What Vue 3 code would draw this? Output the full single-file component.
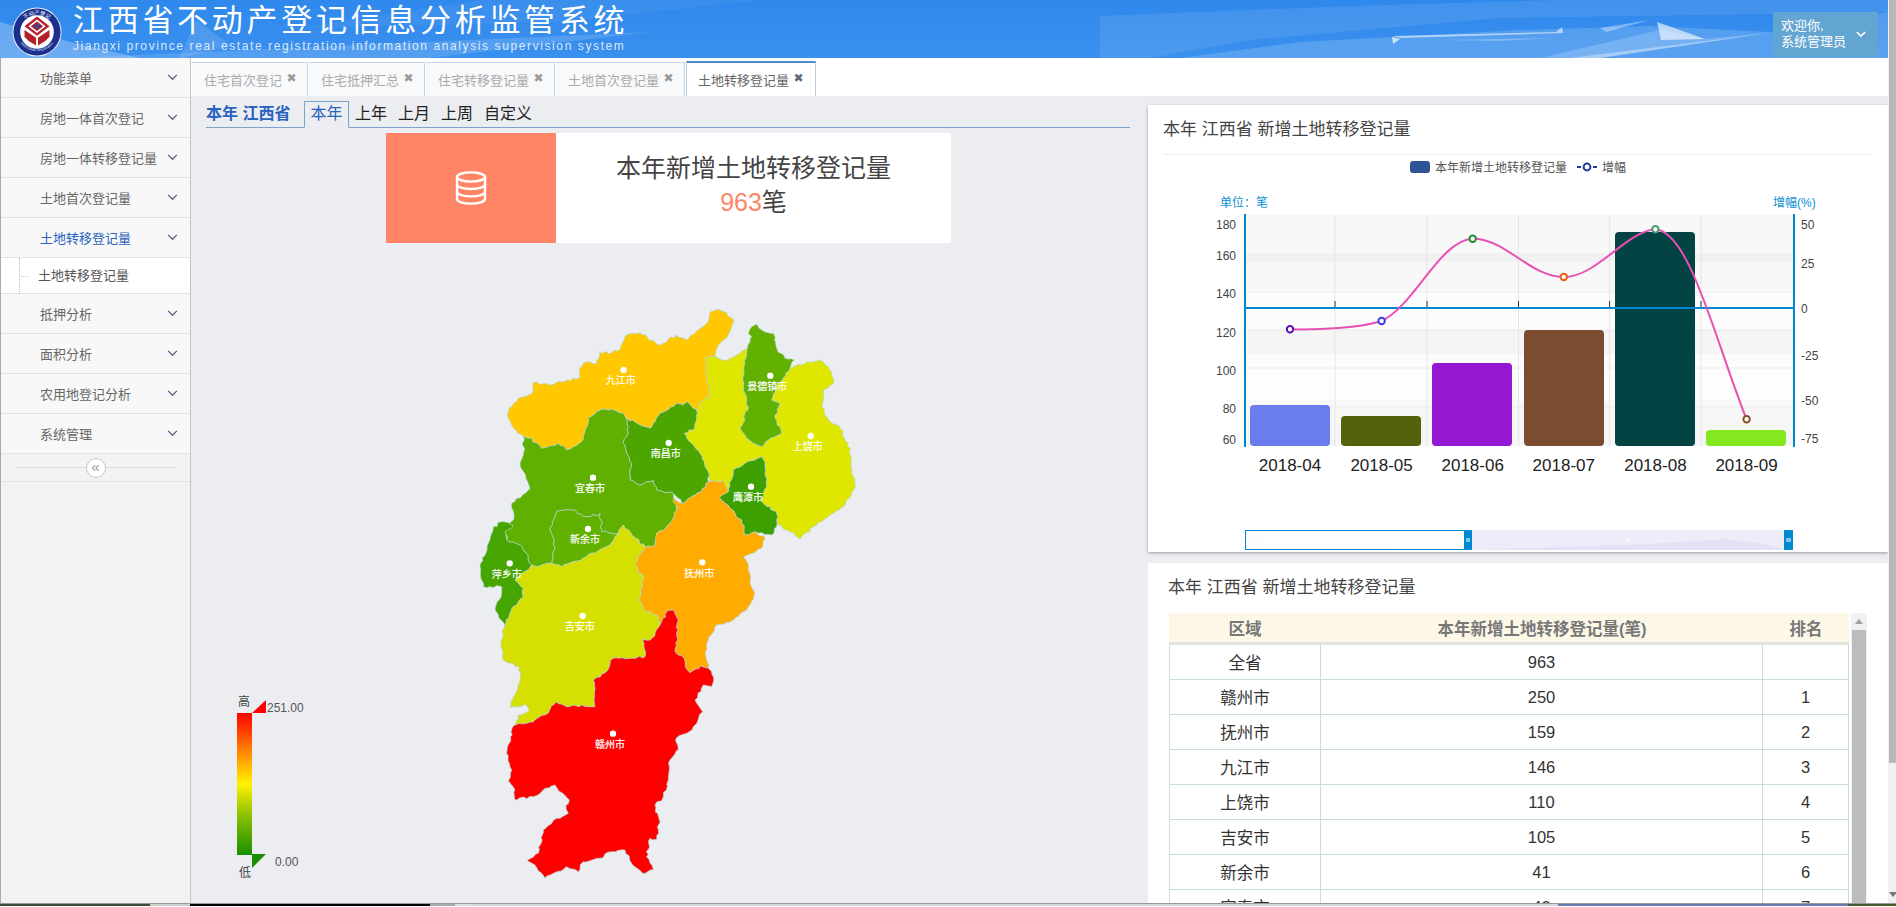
<template>
  <div class="page">
    <div class="frame">
      <div class="app">
        <!-- 顶部标题栏 -->
        <header class="top-bar">
          <svg class="top-deco" viewBox="0 0 1888 58" preserveAspectRatio="none">
            <polygon points="0,22 70,42 140,58 0,58" fill="#fff" opacity=".25" />
            <polygon points="70,58 650,32 430,58" fill="#fff" opacity=".14" />
            <polygon points="196,20 232,46 180,58" fill="#fff" opacity=".12" />
            <polygon points="480,0 760,0 560,22 300,28" fill="#fff" opacity=".05" />
            <polygon points="1100,16 1350,6 1560,0 1888,0 1888,12 1500,18 1250,40 1150,58 1100,58" fill="#fff" opacity=".09" />
            <polygon points="1180,58 1300,42 1520,30 1650,26 1770,32 1888,12 1888,58" fill="#fff" opacity=".16" />
            <polygon points="1540,58 1660,30 1705,39 1773,32 1600,58" fill="#fff" opacity=".18" />
            <polygon points="1392,36 1556,32 1562,27 1563,33 1400,38" fill="#fff" opacity=".55" />
            <polygon points="1392,37 1400,39 1393,44" fill="#fff" opacity=".7" />
            <polygon points="1440,40 1555,38 1500,41" fill="#fff" opacity=".25" />
            <polygon points="1657,22 1705,39 1661,40" fill="#fff" opacity=".6" />
            <polygon points="1600,28 1650,20 1606,32" fill="#fff" opacity=".35" />
            <polygon points="1570,58 1770,33 1600,58" fill="#fff" opacity=".35" />
          </svg>
          <svg class="logo" viewBox="0 0 52 52">
            <defs>
              <path id="ring-top" d="M6 28 A20 20 0 0 1 46 28" />
              <path id="ring-bottom" d="M4 24 A22 22 0 0 0 48 24" />
            </defs>
            <circle cx="26" cy="26" r="25.5" fill="#e8eef8" />
            <circle cx="26" cy="26" r="24.5" fill="#1b2f8c" />
            <circle cx="26" cy="26" r="17.5" fill="#fff" />
            <text class="logo-text"><textPath href="#ring-top" startOffset="50%" text-anchor="middle">不动产登记</textPath></text>
            <text class="logo-en"><textPath href="#ring-bottom" startOffset="50%" text-anchor="middle">Real Estate Registration</textPath></text>
            <polygon points="26,10 39,20 26,30 13,20" fill="#b3202a" />
            <polygon points="26,13 35,20 26,27 17,20" fill="#fff" />
            <polygon points="26,15 32.4,20 26,25 19.6,20" fill="#b3202a" />
            <polygon points="26,17.2 29.6,20 26,22.8 22.4,20" fill="#2c4aa0" />
            <polygon points="13,24 25,32 25,40 17,35 13,31" fill="#b3202a" />
            <polygon points="39,24 27,32 27,40 35,35 39,31" fill="#b3202a" />
          </svg>
          <div class="brand">
            <div class="brand-cn">江西省不动产登记信息分析监管系统</div>
            <div class="brand-en">Jiangxi province real estate registration information analysis supervision system</div>
          </div>
          <div class="user-box">
            <div>欢迎你,<br />系统管理员</div>
            <svg class="user-arrow" viewBox="0 0 12 8"><polyline points="1,1 6,6 11,1" /></svg>
          </div>
        </header>

        <div class="body-row">
          <!-- 左侧菜单 -->
          <aside class="side">
            <template v-for="item in menus" :key="item.name">
              <div class="menu-item" :class="{ active: item.active }">
                <span>{{ item.name }}</span>
                <svg class="chevron" viewBox="0 0 12 8"><polyline points="1,1 6,6 11,1" /></svg>
              </div>
              <div v-if="item.child" class="menu-child">
                <i class="tree-v"></i><i class="tree-h"></i>
                <span>{{ item.child }}</span>
              </div>
            </template>
            <div class="collapse-row">
              <span class="collapse-btn">«</span>
            </div>
          </aside>

          <main class="main">
            <!-- 标签页 -->
            <div class="tabs">
              <div
                v-for="(tab, index) in tabs"
                :key="tab"
                class="tab"
                :class="{ active: index === tabs.length - 1 }"
              >
                <span>{{ tab }}</span><span class="tab-x">✖</span>
              </div>
            </div>

            <div class="content">
              <section class="left">
                <div class="filter">
                  <span class="filter-title">本年 江西省</span>
                  <span class="filter-on">本年</span>
                  <span v-for="f in filters" :key="f" class="filter-item">{{ f }}</span>
                </div>

                <div class="stat">
                  <div class="stat-icon">
                    <svg viewBox="0 0 32 34" width="32" height="34">
                      <g fill="none" stroke="#fff" stroke-width="2.4">
                        <ellipse cx="16" cy="6" rx="14" ry="4.6" />
                        <path d="M2 6v22c0 2.6 6.3 4.6 14 4.6s14-2 14-4.6V6" />
                        <path d="M2 13.4c0 2.6 6.3 4.6 14 4.6s14-2 14-4.6" />
                        <path d="M2 20.8c0 2.6 6.3 4.6 14 4.6s14-2 14-4.6" />
                      </g>
                    </svg>
                  </div>
                  <div class="stat-text">
                    <div>本年新增土地转移登记量</div>
                    <div><span class="stat-num">963</span>笔</div>
                  </div>
                </div>

                <!-- 地图 -->
                <svg class="map" viewBox="0 0 1260 1851">
                  <path
                    v-for="r in regions"
                    :key="r.name"
                    :d="r.d"
                    :fill="r.color"
                    stroke="#b2d6d2"
                    stroke-width="2"
                    stroke-linejoin="round"
                  />
                  <g v-for="r in regions" :key="r.name + '-label'">
                    <circle :cx="r.dot[0]" :cy="r.dot[1]" r="9.5" fill="#fff" />
                    <text :x="r.dot[0] - 9" :y="r.dot[1] + 43" class="map-label">{{ r.name }}</text>
                  </g>
                </svg>

                <!-- 图例 -->
                <div class="legend">
                  <span class="legend-high">高</span>
                  <span class="legend-max">251.00</span>
                  <i class="legend-top"></i>
                  <i class="legend-bar"></i>
                  <i class="legend-bottom"></i>
                  <span class="legend-min">0.00</span>
                  <span class="legend-low">低</span>
                </div>
              </section>

              <section class="right">
                <div class="card chart-card">
                  <div class="card-title">本年 江西省 新增土地转移登记量</div>
                  <svg class="chart" viewBox="1148 155 740 397">
                    <!-- 图例 -->
                    <rect x="1410" y="161" width="20" height="12" rx="3" fill="#2f5496" />
                    <text x="1435" y="171.5" class="t-legend">本年新增土地转移登记量</text>
                    <line x1="1577" y1="167" x2="1597" y2="167" stroke="#1d3aa0" stroke-width="2" stroke-dasharray="4 12 4" />
                    <circle cx="1587" cy="167" r="3.4" fill="#fff" stroke="#1d3aa0" stroke-width="2" />
                    <text x="1602" y="171.5" class="t-legend">增幅</text>

                    <text x="1220" y="207" class="t-unit">单位：笔</text>
                    <text x="1773" y="207" class="t-unit">增幅(%)</text>

                    <!-- 背景分隔带 -->
                    <rect v-for="b in bands" :key="b[0]" x="1245" :y="b[0]" width="549" :height="b[1]" :fill="b[2]" />
                    <line v-for="x in gridX" :key="x" :x1="x" :x2="x" y1="215" y2="446" stroke="#e6e6e6" />
                    <line v-for="y in gridY" :key="y" x1="1245" x2="1794" :y1="y" :y2="y" stroke="#ececec" />

                    <rect
                      v-for="b in bars"
                      :key="b.x"
                      :x="b.x"
                      :y="b.y"
                      width="80"
                      :height="446 - b.y"
                      rx="4"
                      :fill="b.color"
                    />

                    <line x1="1245" x2="1794" y1="308" y2="308" stroke="#0088d0" stroke-width="2" />
                    <line v-for="x in gridX" :key="'t' + x" :x1="x" :x2="x" y1="301" y2="307" stroke="#333" />
                    <line x1="1245" x2="1245" y1="214" y2="447" stroke="#0088d0" stroke-width="2" />
                    <line x1="1794" x2="1794" y1="214" y2="447" stroke="#0088d0" stroke-width="2" />

                    <text v-for="t in leftTicks" :key="t[0]" x="1236" :y="t[1] + 4.5" class="t-axis" text-anchor="end">{{ t[0] }}</text>
                    <text v-for="t in rightTicks" :key="t[0]" x="1801" :y="t[1] + 4.5" class="t-axis">{{ t[0] }}</text>
                    <text v-for="(m, i) in months" :key="m" :x="points[i].x" y="471" class="t-month" text-anchor="middle">{{ m }}</text>

                    <path
                      d="M1290 329.3C1320 330 1360 328 1381.6 321C1415 305 1440 240 1472.7 238.7C1505 238 1530 277 1563.8 277C1597 277 1625 232 1655.4 229.3C1690 232 1715 340 1746.6 419.3"
                      fill="none"
                      stroke="#ea4fb4"
                      stroke-width="2"
                    />
                    <circle
                      v-for="p in points"
                      :key="p.x"
                      :cx="p.x"
                      :cy="p.y"
                      r="3.2"
                      fill="#fff"
                      :stroke="p.color"
                      stroke-width="2"
                    />

                    <!-- 缩放条 -->
                    <rect x="1245" y="530" width="548" height="20" fill="#eeecf8" />
                    <polygon points="1245,550 1245,540 1330,546 1472,550" fill="#e6e3f6" />
                    <polygon points="1472,550 1650,544 1725,539 1760,543 1785,550" fill="#e4e0f5" />
                    <rect x="1245.5" y="530.5" width="219" height="19" fill="#fff" fill-opacity=".85" stroke="#0088d0" />
                    <rect x="1464" y="530" width="8" height="20" fill="#0088d0" />
                    <rect x="1784" y="530" width="9" height="20" fill="#0088d0" />
                    <path d="M1466 539h4M1466 541h4M1786 539h5M1786 541h5M1626 539h4M1626 541h4" stroke="#fff" />
                  </svg>
                </div>

                <div class="card table-card">
                  <div class="table-title">本年 江西省 新增土地转移登记量</div>
                  <div class="table-wrap">
                    <table class="rank-table">
                      <colgroup>
                        <col class="col-area" />
                        <col class="col-count" />
                        <col class="col-rank" />
                      </colgroup>
                      <thead>
                        <tr>
                          <th>区域</th>
                          <th>本年新增土地转移登记量(笔)</th>
                          <th>排名</th>
                        </tr>
                      </thead>
                      <tbody>
                        <tr v-for="row in rows" :key="row[0]">
                          <td>{{ row[0] }}</td>
                          <td>{{ row[1] }}</td>
                          <td>{{ row[2] }}</td>
                        </tr>
                      </tbody>
                    </table>
                    <div class="table-scroll">
                      <div class="scroll-up"></div>
                      <div class="scroll-thumb"></div>
                    </div>
                  </div>
                </div>
              </section>
            </div>
          </main>
        </div>
      </div>

      <!-- 页面滚动条 -->
      <div class="page-scroll">
        <div class="page-thumb"></div>
        <div class="page-down"></div>
      </div>
    </div>

    <div class="taskbar">
      <i v-for="s in taskbar" :key="s[0]" :style="{ width: s[1] + 'px', background: s[0] }"></i>
    </div>
  </div>
</template>

<script setup>
const menus = [
  { name: '功能菜单' },
  { name: '房地一体首次登记' },
  { name: '房地一体转移登记量' },
  { name: '土地首次登记量' },
  { name: '土地转移登记量', active: true, child: '土地转移登记量' },
  { name: '抵押分析' },
  { name: '面积分析' },
  { name: '农用地登记分析' },
  { name: '系统管理' }
]

const tabs = ['住宅首次登记', '住宅抵押汇总', '住宅转移登记量', '土地首次登记量', '土地转移登记量']
const filters = ['上年', '上月', '上周', '自定义']

const bands = [
  [215, 38, '#f8f8f8'], [253, 9, '#f1f1f1'], [262, 30, '#f8f8f8'], [292, 38, '#fcfcfc'],
  [330, 24, '#f5f5f5'], [354, 14, '#fcfcfc'], [368, 32, '#fdfdfd'], [400, 7, '#f8f8f8'], [407, 39, '#f6f6f6']
]
const gridX = [1335, 1427, 1518.5, 1609.6, 1701]
const gridY = [292, 330, 368, 407]

const bars = [
  { x: 1250, y: 405, color: '#6b7cec' },
  { x: 1341, y: 416, color: '#55620c' },
  { x: 1432, y: 363, color: '#9517d2' },
  { x: 1524, y: 330, color: '#7a4c30' },
  { x: 1615, y: 232, color: '#034343' },
  { x: 1706, y: 430, color: '#84e81f' }
]
const points = [
  { x: 1290, y: 329.3, color: '#5a0fb0' },
  { x: 1381.6, y: 321, color: '#3a3af0' },
  { x: 1472.7, y: 238.7, color: '#1e8a30' },
  { x: 1563.8, y: 277, color: '#f05a10' },
  { x: 1655.4, y: 229.3, color: '#4a9a70' },
  { x: 1746.6, y: 419.3, color: '#8a5020' }
]
const months = ['2018-04', '2018-05', '2018-06', '2018-07', '2018-08', '2018-09']
const leftTicks = [[180, 224.6], [160, 255], [140, 293], [120, 332], [100, 370], [80, 408], [60, 439]]
const rightTicks = [[50, 224.6], [25, 263], [0, 308.6], [-25, 355], [-50, 400], [-75, 438]]

const rows = [
  ['全省', 963, ''],
  ['赣州市', 250, 1],
  ['抚州市', 159, 2],
  ['九江市', 146, 3],
  ['上饶市', 110, 4],
  ['吉安市', 105, 5],
  ['新余市', 41, 6],
  ['宜春市', 40, 7]
]

const taskbar = [
  ['#3c4a33', 150], ['#cfcfcf', 40], ['#000', 240], ['#aaa', 25], ['#ddd', 17],
  ['#d8d8d8', 1086], ['#6a78b0', 290], ['#4c5a30', 48]
]

// 边界锯齿：按坐标取哈希，相邻区域共用的边能对上
const noise = (x, y, k) => {
  const v = Math.sin(x * 12.9898 + y * 78.233 + k) * 43758.5453
  return (v - Math.floor(v)) * 2 - 1
}
const rough = (pts) => {
  let d = ''
  pts.forEach((p, i) => {
    const q = pts[(i + 1) % pts.length]
    const steps = Math.max(1, Math.floor(Math.hypot(q[0] - p[0], q[1] - p[1]) / 9))
    for (let s = 0; s < steps; s++) {
      const x = Math.round(p[0] + ((q[0] - p[0]) * s) / steps)
      const y = Math.round(p[1] + ((q[1] - p[1]) * s) / steps)
      const j = s === 0 ? 0 : 4
      d += `${d ? 'L' : 'M'}${(x + noise(x, y, 1) * j).toFixed(1)} ${(y + noise(x, y, 2) * j).toFixed(1)}`
    }
  })
  return d + 'Z'
}

const regionData = [
  {
    name: '九江市', color: '#ffc800', dot: [491, 240],
    pts: [[145, 365], [175, 325], [215, 312], [220, 278], [265, 285], [320, 270], [360, 262], [358, 238], [380, 215], [410, 222], [418, 185], [445, 190], [480, 178], [498, 135], [540, 128], [570, 150], [600, 165], [650, 135], [680, 150], [735, 105], [745, 95], [752, 65], [775, 58], [800, 68], [822, 92], [810, 125], [785, 155], [768, 180], [768, 200], [735, 205], [740, 260], [750, 320], [718, 340], [712, 368], [682, 335], [668, 345], [650, 340], [600, 370], [570, 415], [540, 405], [498, 385], [490, 370], [455, 357], [420, 360], [385, 385], [375, 425], [365, 455], [340, 470], [320, 480], [295, 460], [265, 470], [245, 475], [215, 445], [190, 440], [160, 415], [145, 385]]
  },
  {
    name: '上饶市', color: '#dfe600', dot: [1052, 438],
    pts: [[735, 205], [768, 200], [800, 212], [830, 195], [862, 175], [855, 220], [850, 300], [865, 350], [840, 415], [860, 445], [905, 470], [925, 450], [965, 430], [945, 375], [960, 340], [935, 330], [950, 290], [990, 235], [1040, 215], [1085, 212], [1110, 240], [1122, 280], [1090, 300], [1085, 350], [1110, 395], [1140, 415], [1165, 460], [1175, 540], [1187, 590], [1150, 650], [1105, 680], [1060, 710], [1020, 748], [990, 725], [955, 705], [950, 670], [905, 635], [920, 590], [915, 530], [905, 500], [885, 510], [855, 520], [820, 540], [805, 605], [790, 572], [750, 575], [745, 545], [720, 490], [695, 460], [672, 430], [700, 420], [710, 390], [712, 368], [718, 340], [750, 320], [740, 260]]
  },
  {
    name: '景德镇市', color: '#62b000', dot: [931, 257],
    pts: [[890, 102], [905, 120], [940, 130], [950, 175], [975, 205], [1003, 210], [990, 235], [950, 290], [935, 330], [960, 340], [945, 375], [965, 430], [925, 450], [905, 470], [860, 445], [840, 415], [865, 350], [850, 300], [855, 220], [862, 175], [875, 140], [865, 130], [875, 110]]
  },
  {
    name: '南昌市', color: '#4da500', dot: [626, 459],
    pts: [[498, 385], [540, 405], [570, 415], [600, 370], [650, 340], [668, 345], [682, 335], [712, 368], [710, 390], [700, 420], [672, 430], [695, 460], [720, 490], [745, 545], [745, 575], [725, 605], [695, 620], [665, 640], [640, 610], [590, 600], [580, 572], [540, 585], [510, 570], [515, 520], [490, 460], [505, 430]]
  },
  {
    name: '宜春市', color: '#5fb000', dot: [399, 563],
    pts: [[190, 440], [215, 445], [245, 475], [265, 470], [295, 460], [320, 480], [340, 470], [365, 455], [375, 425], [385, 385], [420, 360], [455, 357], [490, 370], [498, 385], [505, 430], [490, 460], [515, 520], [510, 570], [540, 585], [580, 572], [590, 600], [640, 610], [650, 660], [630, 700], [590, 730], [580, 770], [555, 770], [520, 740], [490, 705], [475, 730], [425, 725], [420, 670], [380, 680], [335, 660], [290, 665], [270, 715], [285, 770], [275, 820], [240, 828], [215, 825], [200, 790], [180, 765], [140, 750], [135, 710], [160, 690], [155, 640], [210, 595], [180, 520], [190, 490]]
  },
  {
    name: '新余市', color: '#62b000', dot: [384, 717],
    pts: [[290, 665], [335, 660], [380, 680], [420, 670], [425, 725], [475, 730], [440, 770], [380, 800], [340, 815], [305, 830], [275, 820], [285, 770], [270, 715]]
  },
  {
    name: '萍乡市', color: '#46a500', dot: [149, 820],
    pts: [[100, 710], [125, 695], [160, 705], [135, 725], [140, 750], [180, 765], [200, 790], [215, 825], [165, 870], [190, 895], [190, 920], [160, 950], [135, 1008], [105, 960], [125, 910], [125, 890], [70, 890], [60, 830], [85, 760]]
  },
  {
    name: '鹰潭市', color: '#3d9f00', dot: [873, 590],
    pts: [[905, 500], [915, 530], [920, 590], [905, 635], [950, 670], [950, 710], [935, 735], [885, 725], [855, 735], [845, 690], [810, 655], [778, 622], [805, 605], [820, 540], [855, 520], [885, 510]]
  },
  {
    name: '抚州市', color: '#ffab00', dot: [727, 817],
    pts: [[555, 770], [580, 770], [590, 730], [630, 700], [650, 660], [640, 625], [665, 640], [695, 620], [725, 605], [745, 575], [750, 575], [790, 572], [805, 605], [778, 622], [810, 655], [845, 690], [855, 735], [885, 725], [915, 745], [905, 775], [850, 800], [865, 830], [870, 880], [885, 910], [860, 960], [820, 990], [770, 1005], [745, 1050], [735, 1085], [745, 1135], [720, 1128], [690, 1148], [678, 1135], [672, 1105], [645, 1085], [655, 990], [640, 960], [622, 962], [600, 1005], [590, 975], [550, 960], [535, 930], [550, 870], [525, 820]]
  },
  {
    name: '吉安市', color: '#d6e000', dot: [368, 978],
    pts: [[165, 870], [215, 825], [240, 828], [275, 820], [305, 830], [340, 815], [380, 800], [440, 770], [475, 730], [490, 705], [520, 740], [555, 770], [525, 820], [550, 870], [535, 930], [550, 960], [590, 975], [600, 1005], [570, 1050], [548, 1048], [555, 1100], [510, 1105], [460, 1105], [435, 1148], [400, 1170], [405, 1250], [365, 1245], [320, 1250], [288, 1235], [255, 1275], [200, 1300], [160, 1308], [175, 1275], [208, 1260], [195, 1242], [165, 1250], [148, 1252], [180, 1170], [178, 1130], [130, 1110], [122, 1055], [135, 1008], [160, 950], [190, 920], [190, 895]]
  },
  {
    name: '赣州市', color: '#ff0000', dot: [459, 1331],
    pts: [[622, 962], [640, 960], [655, 990], [645, 1085], [672, 1105], [678, 1135], [690, 1148], [720, 1128], [745, 1135], [760, 1160], [755, 1190], [730, 1185], [705, 1230], [728, 1265], [700, 1310], [680, 1330], [648, 1345], [655, 1378], [630, 1410], [625, 1470], [610, 1520], [585, 1545], [598, 1590], [590, 1648], [570, 1645], [560, 1700], [580, 1740], [548, 1750], [515, 1720], [495, 1680], [455, 1685], [415, 1705], [370, 1715], [355, 1745], [320, 1730], [280, 1750], [255, 1765], [225, 1725], [202, 1712], [235, 1690], [250, 1620], [290, 1585], [325, 1570], [318, 1545], [328, 1530], [285, 1485], [255, 1495], [220, 1520], [165, 1530], [165, 1500], [145, 1472], [155, 1440], [140, 1390], [160, 1308], [200, 1300], [255, 1275], [288, 1235], [320, 1250], [365, 1245], [405, 1250], [400, 1170], [435, 1148], [460, 1105], [510, 1105], [555, 1100], [548, 1048], [570, 1050], [600, 1005]]
  }
]
const regions = regionData.map((r) => ({ ...r, d: rough(r.pts) }))
</script>

<style scoped>
.page {
  height: 100vh;
  display: flex;
  flex-direction: column;
  overflow: hidden;
  font-family: "Liberation Sans", "Noto Sans CJK SC", sans-serif;
  background: #fff;
}

.frame {
  flex: 1;
  min-height: 0;
  display: flex;
}

.app {
  flex: 1;
  min-width: 0;
  display: flex;
  flex-direction: column;
}

/* 顶部标题栏 */
.top-bar {
  position: relative;
  height: 58px;
  flex-shrink: 0;
  display: flex;
  background: linear-gradient(180deg, #2f88ec 0%, #3a90ee 100%);
  overflow: hidden;
}

.top-deco {
  position: absolute;
  left: 0;
  top: 0;
  width: 100%;
  height: 100%;
}

.logo {
  position: relative;
  width: 50px;
  height: 50px;
  margin: 7px 0 0 12px;
  flex-shrink: 0;
}

.logo-text {
  font-size: 5.5px;
  fill: #fff;
}

.logo-en {
  font-size: 3.6px;
  fill: #dfe6f8;
}

.brand {
  position: relative;
  margin-left: 11px;
  color: #fff;
}

.brand-cn {
  font-size: 31px;
  line-height: 38px;
  margin-top: 2px;
  letter-spacing: 3.7px;
}

.brand-en {
  font-size: 12px;
  line-height: 14px;
  margin-top: -1px;
  letter-spacing: 1.6px;
  color: rgba(255, 255, 255, 0.82);
  white-space: nowrap;
}

.user-box {
  position: relative;
  margin: 12px 10px 1px auto;
  width: 105px;
  box-sizing: border-box;
  padding: 6px 0 0 8px;
  background: #63a5d2;
  color: #fff;
  font-size: 13px;
  line-height: 16px;
}

.user-arrow {
  position: absolute;
  right: 12px;
  top: 19px;
  width: 10px;
  height: 7px;
  fill: none;
  stroke: #fff;
  stroke-width: 2;
}

.body-row {
  flex: 1;
  min-height: 0;
  display: flex;
}

/* 左侧菜单 */
.side {
  width: 191px;
  flex-shrink: 0;
  box-sizing: border-box;
  background: #f2f2f2;
  border-left: 1px solid #aaa;
  border-right: 1px solid #c4c4c4;
}

.menu-item {
  height: 40px;
  box-sizing: border-box;
  display: flex;
  align-items: center;
  justify-content: space-between;
  padding: 0 12px 0 39px;
  background: #f8f8f8;
  border-bottom: 1px solid #e2e2e2;
  font-size: 13px;
  color: #666;
}

.menu-item.active {
  color: #2a63c0;
}

.chevron {
  width: 11px;
  height: 7px;
  fill: none;
  stroke: #56657a;
  stroke-width: 1.5;
}

.menu-child {
  position: relative;
  height: 36px;
  box-sizing: border-box;
  padding-left: 37px;
  line-height: 35px;
  background: #fff;
  border-bottom: 1px solid #e2e2e2;
  font-size: 13px;
  color: #555;
}

.tree-v {
  position: absolute;
  left: 18px;
  top: 0;
  height: 36px;
  border-left: 1px dotted #a9bdd4;
}

.tree-h {
  position: absolute;
  left: 20px;
  top: 18px;
  width: 7px;
  border-top: 1px dotted #b8c6d6;
}

.collapse-row {
  position: relative;
  height: 27px;
  border-bottom: 1px solid #e2e2e2;
  display: flex;
  align-items: center;
  justify-content: center;
}

.collapse-row::before {
  content: "";
  position: absolute;
  left: 15px;
  right: 14px;
  top: 13px;
  border-top: 1px solid #dcdcdc;
}

.collapse-btn {
  position: relative;
  width: 18px;
  height: 18px;
  border: 1px solid #c4c4c4;
  border-radius: 50%;
  background: #fff;
  color: #999;
  font-size: 15px;
  line-height: 15px;
  text-align: center;
}

.main {
  flex: 1;
  min-width: 0;
  display: flex;
  flex-direction: column;
}

/* 标签页 */
.tabs {
  height: 38px;
  flex-shrink: 0;
  box-sizing: border-box;
  padding: 4px 0 0 1px;
  display: flex;
  gap: 1px;
  background: #fff;
}

.tab {
  height: 34px;
  box-sizing: border-box;
  padding: 0 9px 0 12px;
  display: flex;
  align-items: center;
  gap: 3px;
  background: #f8f9fa;
  border-top: 1px solid #c5d5e2;
  border-right: 1px solid #c5d5e2;
  font-size: 13px;
  color: #aaa;
  white-space: nowrap;
}

.tab.active {
  height: 35px;
  margin-top: -1px;
  padding: 0 10px 0 11px;
  background: #fff;
  border-top: 2px solid #4a8fc4;
  border-left: 1px solid #b9cde0;
  border-right: 1px solid #b9cde0;
  color: #666;
}

.tab-x {
  width: 13px;
  font-family: "DejaVu Sans", sans-serif;
  font-size: 12px;
  text-align: center;
  color: #999;
  margin-top: -4px;
}

.tab.active .tab-x {
  color: #5a6a80;
}

.content {
  flex: 1;
  min-height: 0;
  display: flex;
  background: #ecedf1;
}

/* 左侧地图区 */
.left {
  position: relative;
  width: 957px;
  flex-shrink: 0;
  box-sizing: border-box;
  padding: 5px 18px 0 15px;
}

.filter {
  height: 27px;
  box-sizing: border-box;
  display: flex;
  align-items: flex-start;
  border-bottom: 1px solid #7da3c8;
  font-size: 16px;
  color: #222;
}

.filter-title {
  width: 98px;
  height: 27px;
  box-sizing: border-box;
  line-height: 25px;
  font-weight: bold;
  color: #2a63c0;
  border-bottom: 1px solid #7da3c8;
}

.filter-on {
  width: 45px;
  height: 27px;
  box-sizing: border-box;
  line-height: 24px;
  text-align: center;
  color: #2a63c0;
  background: #ecedf1;
  border: 1px solid #7da3c8;
  border-bottom: 1px solid #ecedf1;
}

.filter-item {
  height: 25px;
  line-height: 25px;
  margin-left: 6px;
  margin-right: 5px;
}

.stat {
  width: 565px;
  height: 110px;
  margin: 5px 0 0 180px;
  display: flex;
  background: #fff;
}

.stat-icon {
  width: 170px;
  display: flex;
  align-items: center;
  justify-content: center;
  background: #ff8566;
}

.stat-text {
  flex: 1;
  padding-top: 18px;
  text-align: center;
  font-size: 25px;
  line-height: 34px;
  color: #444;
}

.stat-num {
  color: #ff8566;
}

.map {
  position: absolute;
  left: 269px;
  top: 194px;
  width: 420px;
  height: 617px;
}

.map-label {
  font-size: 30px;
  fill: #fff;
  stroke: #fff;
  stroke-width: 0.6;
  text-anchor: middle;
}

.legend {
  position: absolute;
  left: 46px;
  top: 596px;
  width: 120px;
  height: 190px;
  font-size: 12px;
  color: #555;
}

.legend span,
.legend i {
  position: absolute;
}

.legend-high {
  left: 1px;
  top: 0;
  color: #444;
}

.legend-max {
  left: 30px;
  top: 9px;
}

.legend-top {
  left: 15px;
  top: 8px;
  width: 0;
  height: 0;
  border-left: 14px solid transparent;
  border-bottom: 13px solid #ff0000;
}

.legend-bar {
  left: 0;
  top: 21px;
  width: 15px;
  height: 142px;
  background: linear-gradient(180deg, #ff0000 0%, #ff8000 26%, #fff200 50%, #8cc000 72%, #1a9000 100%);
}

.legend-bottom {
  left: 15px;
  top: 162px;
  width: 0;
  height: 0;
  border-right: 14px solid transparent;
  border-top: 14px solid #1a9000;
}

.legend-min {
  left: 38px;
  top: 163px;
}

.legend-low {
  left: 2px;
  top: 171px;
  color: #444;
}

/* 右侧 */
.right {
  flex: 1;
  min-width: 0;
  padding-top: 9px;
  display: flex;
  flex-direction: column;
}

.card {
  background: #fff;
}

.chart-card {
  height: 447px;
  flex-shrink: 0;
  box-shadow: 0 1px 3px rgba(0, 0, 0, 0.35);
}

.card-title {
  height: 49px;
  margin: 0 16px 0 15px;
  border-bottom: 1px solid #eee;
  line-height: 49px;
  font-size: 17px;
  color: #444;
}

.chart {
  display: block;
  width: 740px;
  height: 397px;
}

.t-legend {
  font-size: 12px;
  fill: #555;
}

.t-unit {
  font-size: 12px;
  fill: #0a8fd4;
}

.t-axis {
  font-size: 12px;
  fill: #444;
}

.t-month {
  font-size: 17px;
  fill: #222;
}

.table-card {
  flex: 1;
  min-height: 0;
  margin-top: 11px;
  overflow: hidden;
}

.table-title {
  height: 50px;
  padding-left: 20px;
  line-height: 50px;
  font-size: 17px;
  color: #444;
}

.table-wrap {
  display: flex;
  align-items: flex-start;
  padding-left: 21px;
}

.rank-table {
  width: 680px;
  table-layout: fixed;
  border-collapse: separate;
  border-spacing: 0;
  font-size: 16.5px;
  color: #333;
  text-align: center;
}

.col-area {
  width: 152px;
}

.col-count {
  width: 442px;
}

.col-rank {
  width: 86px;
}

.rank-table th {
  height: 32px;
  box-sizing: border-box;
  padding: 0;
  background: #fdf7e7;
  border-bottom: 3px solid #e4e4df;
  color: #777;
  font-weight: bold;
}

.rank-table td {
  height: 35px;
  box-sizing: border-box;
  padding: 0;
  border-bottom: 1px solid #c9dde0;
  border-right: 1px solid #c9dde0;
}

.rank-table td:first-child {
  border-left: 1px solid #c9dde0;
}

.table-scroll {
  width: 16px;
  margin-left: 2px;
  background: #f1f1f1;
}

.scroll-up {
  position: relative;
  height: 17px;
}

.scroll-up::after {
  content: "";
  position: absolute;
  left: 4px;
  top: 6px;
  border-left: 4px solid transparent;
  border-right: 4px solid transparent;
  border-bottom: 5px solid #a0a0a0;
}

.scroll-thumb {
  width: 14px;
  height: 400px;
  margin-left: 1px;
  background: #bcbcbc;
}

/* 页面滚动条 */
.page-scroll {
  position: relative;
  width: 8px;
  flex-shrink: 0;
  background: #f0f0f0;
}

.page-thumb {
  height: 763px;
  margin-left: 1px;
  background: #b9b9b9;
}

.page-down {
  position: absolute;
  left: 1px;
  bottom: 6px;
  border-left: 4px solid transparent;
  border-right: 4px solid transparent;
  border-top: 5px solid #777;
}

.taskbar {
  height: 3px;
  flex-shrink: 0;
  display: flex;
  border-top: 1px solid #999;
}

.taskbar i {
  display: block;
  height: 2px;
}
</style>

<style>
html,
body {
  margin: 0;
  overflow: hidden;
}
</style>
